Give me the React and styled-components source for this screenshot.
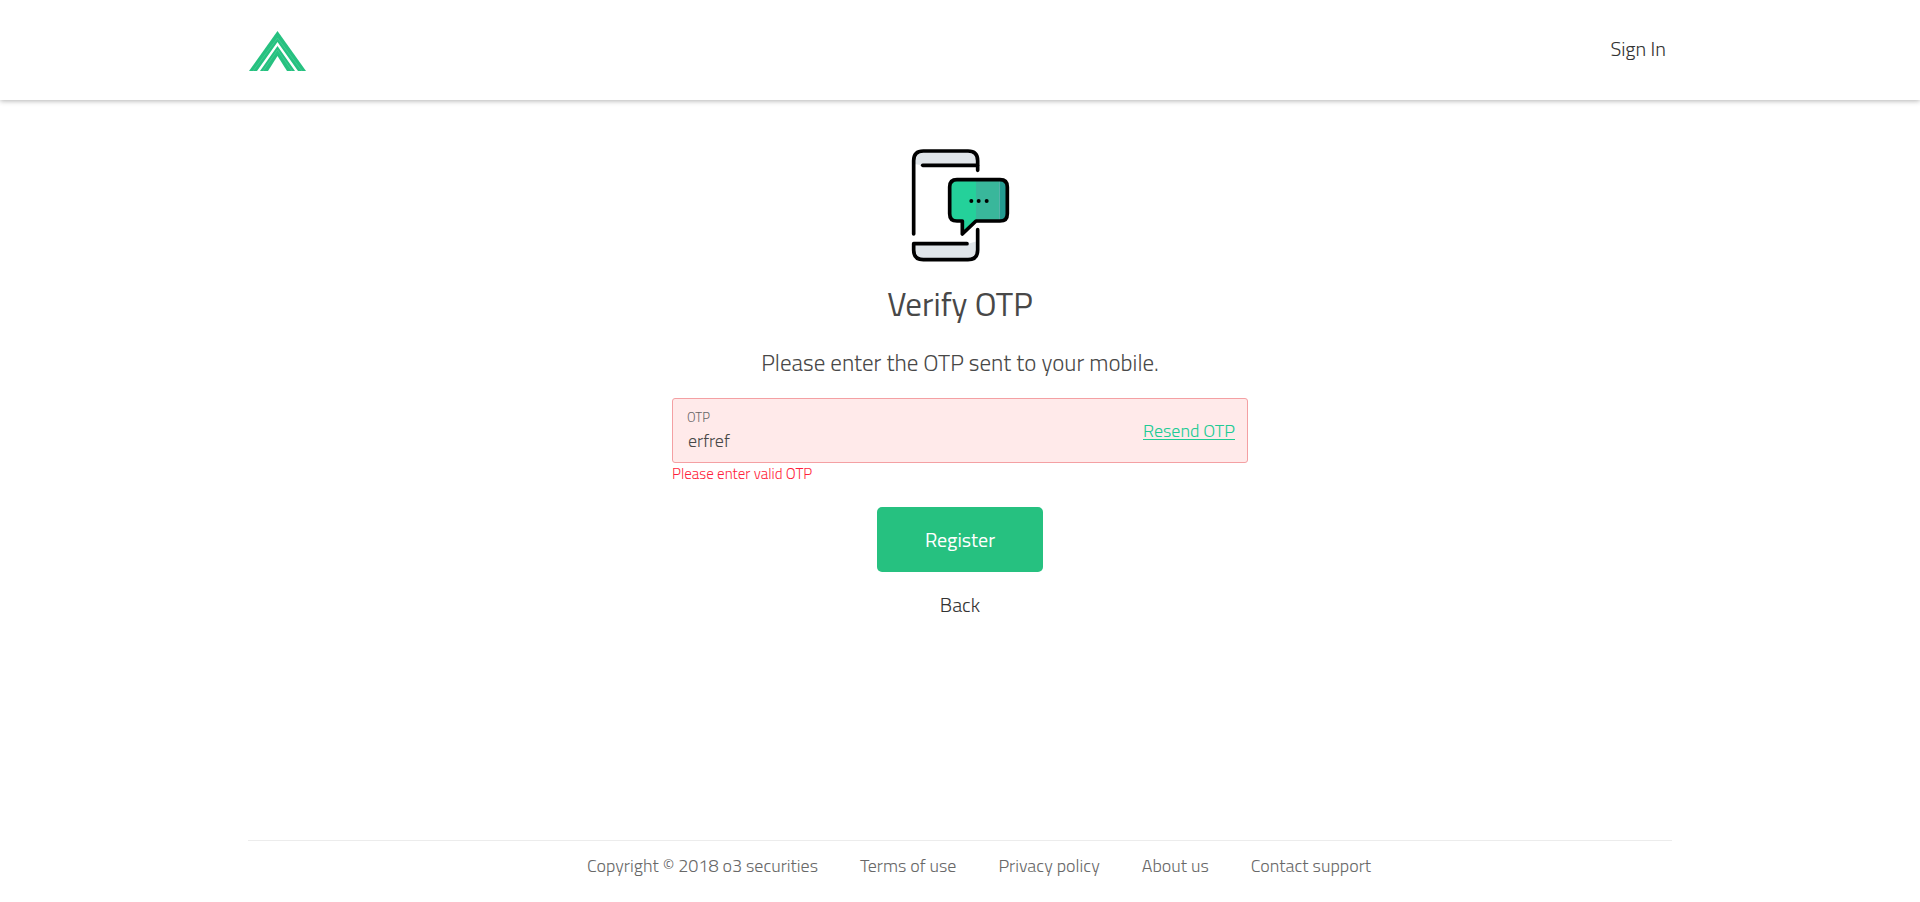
import React from "react";
import styled, { createGlobalStyle } from "styled-components";

const GlobalStyle = createGlobalStyle`
  *, *::before, *::after { box-sizing: border-box; }
  body {
    margin: 0;
    background: #fff;
    color: #484848;
    font-family: "Titillium Web", Roboto, "Open Sans", sans-serif;
    font-weight: 300;
    font-size: 18px;
    line-height: 24px;
  }
`;

const Page = styled.div`
  min-height: 100vh;
  display: flex;
  flex-direction: column;
`;

const Container = styled.div`
  width: 100%;
  max-width: 1456px;
  margin: 0 auto;
  padding: 0 16px;
`;

const Header = styled.header`
  background: #fff;
  box-shadow: 0 1px 5px rgba(0, 0, 0, 0.3);
`;

const HeaderRow = styled(Container)`
  height: 100px;
  padding-bottom: 2px;
  display: flex;
  align-items: center;
  justify-content: space-between;
`;

const LogoLink = styled.a`
  display: block;
  svg { display: block; }
`;

const NavLink = styled.a`
  padding: 0 6px;
  color: #333;
  font-size: 20px;
  line-height: 28px;
  text-decoration: none;
`;

const Main = styled.main`
  flex: 1;
  padding: 48px 16px;
  display: flex;
  flex-direction: column;
  align-items: center;
`;

const Title = styled.h1`
  margin: 18px 0 0;
  font-size: 33px;
  line-height: 48px;
  font-weight: 400;
`;

const Lead = styled.p`
  margin: 17px 0;
  font-size: 23px;
  line-height: 36px;
  text-align: center;
`;

const Form = styled.form`
  width: 100%;
  max-width: 576px;
  display: flex;
  flex-direction: column;
  align-items: center;
`;

const Field = styled.div`
  width: 100%;
  height: 65px;
  padding: 0 12px 0 14px;
  display: flex;
  align-items: center;
  border: 1px solid #f4a0a3;
  border-radius: 3px;
  background: #ffeaea;
`;

const FieldText = styled.div`
  flex: 1;
  min-width: 0;
  display: flex;
  flex-direction: column;
`;

const Label = styled.label`
  color: #666;
  font-size: 13px;
  line-height: 20px;
`;

const Input = styled.input`
  width: 100%;
  height: 28px;
  padding: 0 1px;
  border: 0;
  outline: 0;
  background: transparent;
  color: #484848;
  font: inherit;
`;

const ResendLink = styled.a`
  color: #20cb94;
  line-height: 28px;
  text-underline-offset: 2px;
`;

const ErrorText = styled.p`
  align-self: flex-start;
  margin: 0 0 22px;
  color: #ff1f3d;
  font-size: 15px;
  line-height: 22px;
`;

const SubmitButton = styled.button`
  min-width: 166px;
  height: 65px;
  border: 0;
  border-radius: 5px;
  background: #26c180;
  color: #fff;
  font: inherit;
  font-size: 20px;
  font-weight: 400;
`;

const BackLink = styled(NavLink)`
  margin-top: 19px;
`;

const Footer = styled(Container)`
  padding-bottom: 16px;
`;

const FooterList = styled.ul`
  margin: 0;
  padding: 13px 0 8px 38px;
  border-top: 1px solid #ececec;
  display: flex;
  flex-wrap: wrap;
  justify-content: center;
  column-gap: 42px;
  list-style: none;
  color: #686868;
`;

const FooterLink = styled.a`
  color: inherit;
  text-decoration: none;
`;

function Logo() {
  return (
    <svg width="58" height="44" viewBox="-1 -4 58 44" aria-hidden="true">
      <path d="M28.500 0 57 40H0Z" fill="#26c180" />
      <path d="M8 40H11L28.500 15 46 40H49L28.500 11Z" fill="#fff" />
      <path d="M19 40 28.500 25 38 40Z" fill="#fff" />
      <path d="M4 40 28.500 7 53 40M14 40 28.500 19 43 40" fill="none" stroke="#54d09a" strokeWidth="0.6" />
    </svg>
  );
}

function PhoneMessage() {
  return (
    <svg width="102" height="114" viewBox="57 39 306 342" aria-hidden="true">
      <path d="M71 87V77Q71 48 100 48H234Q263 48 263 77V91H98Z" fill="#e0e5e9" />
      <path d="M71 326H234L263 318V345Q263 374 234 374H100Q71 374 71 345Z" fill="#e0e5e9" />
      <path d="M201 134H258V258L217 297V258H201Q179 258 179 236V156Q179 134 201 134Z" fill="#24d19a" />
      <path d="M258 134H328V258H258Z" fill="#39b79b" />
      <path d="M328 134Q352 134 352 156V236Q352 258 328 258Z" fill="#239b91" />
      <g fill="none" stroke="#000" strokeWidth="11" strokeLinecap="round" strokeLinejoin="round">
        <path d="M71 297V77Q71 48 100 48H234Q263 48 263 77V106" />
        <path d="M98 91H262" />
        <path d="M231 326H71V345Q71 374 100 374H234Q263 374 263 345V284" />
        <path d="M201 134H330Q352 134 352 156V236Q352 258 330 258H258L217 297V258H201Q179 258 179 236V156Q179 134 201 134Z" />
      </g>
      <circle cx="244" cy="198" r="6" />
      <circle cx="266" cy="198" r="6" />
      <circle cx="290" cy="198" r="6" />
    </svg>
  );
}

const footerLinks = ["Terms of use", "Privacy policy", "About us", "Contact support"];

export default function App() {
  return (
    <>
      <GlobalStyle />
      <Page>
        <Header>
          <HeaderRow>
            <LogoLink href="#" aria-label="o3 securities">
              <Logo />
            </LogoLink>
            <NavLink href="#">Sign In</NavLink>
          </HeaderRow>
        </Header>
        <Main>
          <PhoneMessage />
          <Title>Verify OTP</Title>
          <Lead>Please enter the OTP sent to your mobile.</Lead>
          <Form onSubmit={(event) => event.preventDefault()}>
            <Field>
              <FieldText>
                <Label htmlFor="otp">OTP</Label>
                <Input id="otp" type="text" defaultValue="erfref" aria-invalid="true" aria-describedby="otp-error" />
              </FieldText>
              <ResendLink href="#">Resend OTP</ResendLink>
            </Field>
            <ErrorText id="otp-error">Please enter valid OTP</ErrorText>
            <SubmitButton type="submit">Register</SubmitButton>
            <BackLink href="#">Back</BackLink>
          </Form>
        </Main>
        <Footer as="footer">
          <FooterList>
            <li>Copyright © 2018 o3 securities</li>
            {footerLinks.map((text) => (
              <li key={text}>
                <FooterLink href="#">{text}</FooterLink>
              </li>
            ))}
          </FooterList>
        </Footer>
      </Page>
    </>
  );
}
